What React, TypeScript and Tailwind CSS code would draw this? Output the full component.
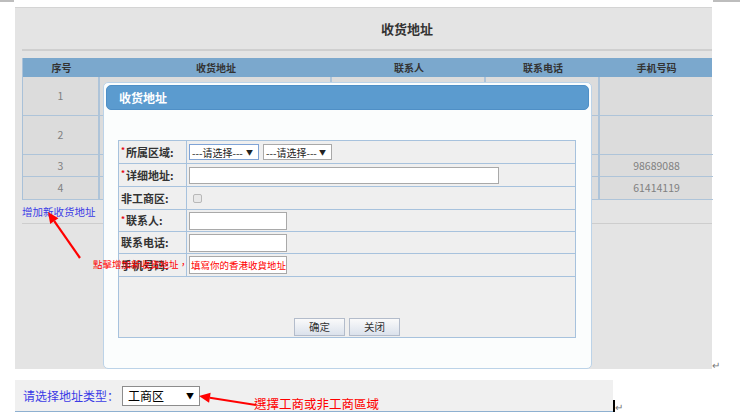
const FONT = "font-['Noto_Sans_CJK_SC','Noto_Sans',sans-serif]";

const COLS = ["序号", "收货地址", "联系人", "联系电话", "手机号码"];
const ROWS = [
  { no: "1", mobile: "", h: "h-[39px]" },
  { no: "2", mobile: "", h: "h-[39px]" },
  { no: "3", mobile: "98689088", h: "h-[22px]" },
  { no: "4", mobile: "61414119", h: "h-[23px]" },
];

function Select({ focused, className }: { focused?: boolean; className: string }) {
  return (
    <div
      className={`flex h-[16px] items-center justify-between border bg-white pl-[2px] pr-[5px] text-[10px] text-[#222] ${
        focused ? "border-[#7fa3d6]" : "border-[#a9a9a9]"
      } ${className}`}
    >
      <span>---请选择---</span>
      <span className="text-[7px]">▼</span>
    </div>
  );
}

function FormRow({
  label,
  required,
  h,
  children,
}: {
  label: string;
  required?: boolean;
  h: string;
  children?: React.ReactNode;
}) {
  return (
    <div className={`grid grid-cols-[68px_1fr] border-b border-[#a7c2dd] ${h}`}>
      <div className="flex items-center border-r border-[#a7c2dd] pl-[2px] text-[11px] font-bold text-[#333]">
        {required && <span className="mr-px self-start pt-[5px] text-[8px] leading-none text-red-600">*</span>}
        {label}
      </div>
      <div className="flex items-center gap-[4px] pl-[2px]">{children}</div>
    </div>
  );
}

function Arrow({ x1, y1, x2, y2 }: { x1: number; y1: number; x2: number; y2: number }) {
  const a = Math.atan2(y2 - y1, x2 - x1);
  const L = 11;
  const W = 5;
  const bx = x2 - L * Math.cos(a);
  const by = y2 - L * Math.sin(a);
  const px = -Math.sin(a) * W;
  const py = Math.cos(a) * W;
  return (
    <g>
      <line x1={x1} y1={y1} x2={bx} y2={by} stroke="#f00" strokeWidth={2.2} />
      <polygon points={`${x2},${y2} ${bx + px},${by + py} ${bx - px},${by - py}`} fill="#f00" />
    </g>
  );
}

export default function App() {
  return (
    <div className={`relative h-[420px] w-[740px] overflow-hidden bg-white ${FONT}`}>
      <div className="absolute left-0 top-0 h-[2px] w-[14px] bg-[#bdbdbd]" />
      <div className="absolute right-0 top-0 h-[2px] w-[27px] bg-[#bdbdbd]" />

      {/* top screenshot */}
      <div className="flex items-end pt-[7px]">
        <div className="relative ml-[15px] h-[362px] w-[697px] border-t border-[#d4d4d4] bg-[#e4e4e4]">
          <div className="flex h-[41px] items-center pl-[366px] text-[13px] font-semibold text-[#333]">
            收货地址
          </div>
          <div className="ml-[7px] h-[2px] bg-[#cfcfcf]" />

          <div className="ml-[7px] mt-[7px] border-l border-[#a9c1d8]">
            <div className="grid h-[19px] grid-cols-[77px_232px_154px_114px_113px] bg-[#7ba8cd] text-[10px] font-semibold text-[#333]">
              {COLS.map((c) => (
                <div key={c} className="flex items-center justify-center">
                  {c}
                </div>
              ))}
            </div>
            {ROWS.map((r) => (
              <div
                key={r.no}
                className={`grid grid-cols-[77px_232px_154px_114px_113px] bg-[#dcdcdc] text-[10.5px] text-[#808080] ${r.h}`}
              >
                <div className="flex items-center justify-center border-b border-r-2 border-[#aec4d9]">{r.no}</div>
                <div className="border-b border-r-2 border-[#aec4d9]" />
                <div className="border-b border-r-2 border-[#aec4d9]" />
                <div className="border-b border-r-2 border-[#aec4d9]" />
                <div className="flex items-center justify-center border-b border-[#aec4d9]">{r.mobile}</div>
              </div>
            ))}
          </div>
          <div className="ml-[7px] flex h-[24px] items-center border-b border-[#cdcdcd] text-[10.5px] text-[#3b3be6]">
            增加新收货地址
          </div>

          {/* dialog */}
          <div className="absolute left-[88px] top-[74px] flex h-[287px] w-[489px] flex-col rounded-[5px] border border-[#bcd3e8] bg-[#fbfdfd] p-[2px]">
            <div className="flex h-[25px] items-center rounded-[5px] border border-[#4f8fc6] bg-[#5b9bcf] pl-[12px] text-[12px] font-bold text-white">
              收货地址
            </div>
            <div className="ml-[12px] mt-[30px] flex h-[198px] w-[458px] flex-col border border-[#a7c2dd] bg-[#efefef]">
              <FormRow label="所属区域:" required h="h-[23px]">
                <Select focused className="w-[70px]" />
                <Select className="w-[69px]" />
              </FormRow>
              <FormRow label="详细地址:" required h="h-[23px]">
                <div className="h-[17px] w-[310px] border border-[#a9a9a9] bg-white" />
              </FormRow>
              <FormRow label="非工商区:" h="h-[23px]">
                <div className="ml-[4px] h-[9px] w-[9px] rounded-[2px] border border-[#b8b8b8] bg-[#e8e8e8]" />
              </FormRow>
              <FormRow label="联系人:" required h="h-[22px]">
                <div className="h-[18px] w-[98px] border border-[#a9a9a9] bg-white" />
              </FormRow>
              <FormRow label="联系电话:" h="h-[22px]">
                <div className="h-[18px] w-[98px] border border-[#a9a9a9] bg-white" />
              </FormRow>
              <FormRow label="手机号码:" h="h-[23px]">
                <div className="flex h-[18px] w-[98px] items-center overflow-hidden whitespace-nowrap border border-[#a9a9a9] bg-white pl-[1px] font-['Noto_Sans_CJK_TC',sans-serif] text-[9.5px] text-[#f00]">
                  填寫你的香港收貨地址
                </div>
              </FormRow>
              <div className="flex flex-1 items-end justify-center gap-[4px] pb-px">
                {["确定", "关闭"].map((b) => (
                  <div
                    key={b}
                    className="flex h-[18px] w-[51px] items-center justify-center border border-[#b3bccb] bg-gradient-to-b from-[#fafafa] to-[#dbe2ec] text-[10.5px] text-[#333]"
                  >
                    {b}
                  </div>
                ))}
              </div>
            </div>
          </div>
        </div>
        <span className="mb-[-3px] text-[10px] text-[#777]">↵</span>
      </div>

      {/* bottom screenshot */}
      <div className="mt-[11px] flex items-end">
        <div className="ml-[15px] flex h-[32px] w-[598px] items-center border-b border-[#8eb0d0] bg-[#f0f0f0] pl-[8px]">
          <span className="text-[12px] text-[#3a3ae6]">请选择地址类型：</span>
          <div className="ml-[3px] flex h-[20px] w-[78px] items-center justify-between border border-[#8c8c8c] bg-white pl-[5px] pr-[5px] text-[12px] text-black">
            <span>工商区</span>
            <span className="text-[8px]">▼</span>
          </div>
        </div>
        <div className="h-[12px] w-[2px] bg-black" />
        <span className="text-[10px] leading-none text-[#777]">↵</span>
      </div>

      {/* annotations */}
      <div className="absolute left-[93px] top-[257px] whitespace-nowrap font-['Noto_Sans_CJK_TC',sans-serif] text-[9.5px] text-[#f00]">
        點擊增加新收貨地址，
      </div>
      <div className="absolute left-[254px] top-[398px] whitespace-nowrap font-['Noto_Sans_CJK_TC',sans-serif] text-[12.5px] leading-none text-[#f00]">
        選擇工商或非工商區域
      </div>
      <svg className="pointer-events-none absolute left-0 top-0" width={740} height={420}>
        <Arrow x1={80} y1={258} x2={48} y2={212} />
        <Arrow x1={256} y1={405} x2={199} y2={396} />
      </svg>
    </div>
  );
}
